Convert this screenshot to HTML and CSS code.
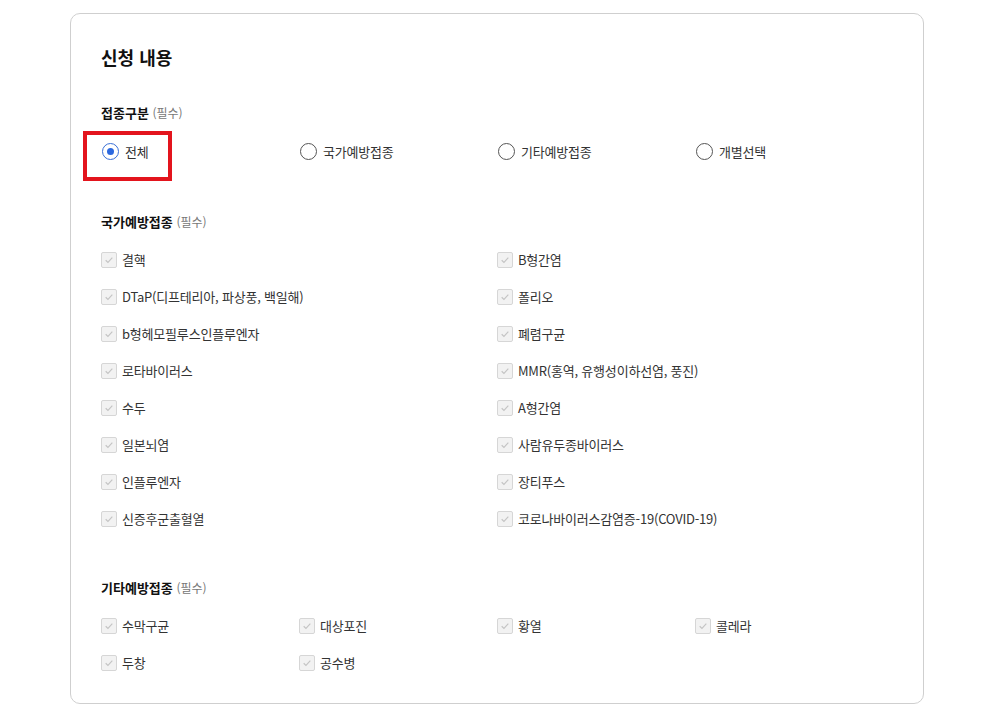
FILE: index.html
```html
<!doctype html>
<html lang="ko">
<head>
	<meta charset="UTF-8">
	<meta name="viewport" content="width=device-width, initial-scale=1.0">
	<title>신청 내용</title>
	<link rel="stylesheet" href="styles.css">
</head>
<body>
	<div class="card">
		<h2 class="card_title">신청 내용</h2>

		<!-- 접종구분 -->
		<div class="group group_first">
			<h3 class="group_title">접종구분 <small>(필수)</small></h3>
			<ul class="opts cols4 radio_row">
				<li class="opt marked">
					<span class="radio on"></span><span>전체</span>
					<span class="mark"></span>
				</li>
				<li class="opt"><span class="radio"></span><span>국가예방접종</span></li>
				<li class="opt"><span class="radio"></span><span>기타예방접종</span></li>
				<li class="opt"><span class="radio"></span><span>개별선택</span></li>
			</ul>
		</div>

		<!-- 국가예방접종 -->
		<div class="group">
			<h3 class="group_title">국가예방접종 <small>(필수)</small></h3>
			<ul class="opts cols2" id="nationList"></ul>
		</div>

		<!-- 기타예방접종 -->
		<div class="group">
			<h3 class="group_title">기타예방접종 <small>(필수)</small></h3>
			<ul class="opts cols4" id="etcList"></ul>
		</div>
	</div>

	<script>
		var nation = ['결핵','B형간염','DTaP(디프테리아, 파상풍, 백일해)','폴리오','b형헤모필루스인플루엔자','폐렴구균',
			'로타바이러스','MMR(홍역, 유행성이하선염, 풍진)','수두','A형간염','일본뇌염','사람유두종바이러스',
			'인플루엔자','장티푸스','신증후군출혈열','코로나바이러스감염증-19(COVID-19)'];
		var etc = ['수막구균','대상포진','황열','콜레라','두창','공수병'];

		function render(list, el){
			var html = '';
			for(var i=0;i<list.length;i++){
				html += "<li class='opt'>";
				html += "<span class='check'><svg viewBox='0 0 16 16' width='16' height='16'><path d='M4.2 8.3l2.6 2.5 5-5.4' fill='none' stroke='#c4c4c4' stroke-width='1.3'/></svg></span>";
				html += "<span>"+list[i]+"</span>";
				html += "</li>";
			}
			el.innerHTML = html;
		}
		render(nation, document.getElementById('nationList'));
		render(etc, document.getElementById('etcList'));
	</script>
</body>
</html>
```
FILE: styles.css
```css
*,*::before,*::after{box-sizing:border-box;}
html,body,ul,li,h2,h3{
	margin:0;padding:0;
	list-style:none;
}
body{
	font-family:"Noto Sans CJK KR","Noto Sans",sans-serif;
	font-size:13px;
	color:#222;
	background:#fff;
}

.card{
	width:854px;
	margin:13px 0 0 70px;
	padding:29px 30px 22px;
	border:1px solid #cfcfcf;
	border-radius:10px;
}
.card_title{
	font-size:18px;
	line-height:28px;
	font-weight:700;
	color:#111;
}

.group{
	margin-top:41px;
}
.group_first{
	margin-top:32px;
}
.group_title{
	height:20px;
	line-height:20px;
	font-size:13px;
	font-weight:700;
	color:#111;
	margin-bottom:9px;
}
.group_title small{
	font-size:12px;
	font-weight:400;
	color:#777;
}

.opts{
	display:grid;
	grid-auto-rows:37px;
}
.cols2{grid-template-columns:repeat(2,396px);}
.cols4{grid-template-columns:repeat(4,198px);}
.radio_row{grid-auto-rows:39px;}

.opt{
	display:flex;
	align-items:center;
	gap:5px;
	position:relative;
	color:#333;
	letter-spacing:-0.2px;
}

.check{
	width:16px;
	height:16px;
	border:1px solid #d6d6d6;
	border-radius:2px;
	background:#f2f2f2;
	display:flex;
	align-items:center;
	justify-content:center;
	flex:none;
}
.check svg{display:block;}

.radio{
	width:17px;
	height:17px;
	margin-left:1px;
	margin-right:1px;
	border:1px solid #555;
	border-radius:50%;
	flex:none;
	display:flex;
	align-items:center;
	justify-content:center;
}
.radio.on{
	border-color:#3a6fd6;
}
.radio.on::after{
	content:"";
	width:7px;
	height:7px;
	border-radius:50%;
	background:#2b68df;
}

/* 강조 표시 */
.mark{
	position:absolute;
	left:-18px;
	top:-1px;
	width:89px;
	height:50px;
	border:4px solid #e3141d;
}
```
